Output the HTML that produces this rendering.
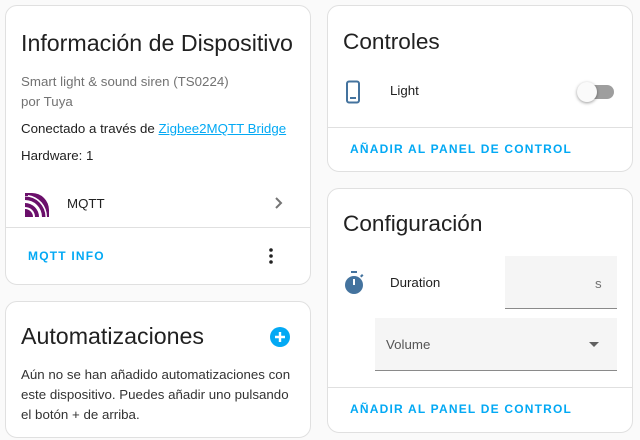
<!DOCTYPE html>
<html><head><meta charset="utf-8">
<style>
*{box-sizing:border-box;margin:0;padding:0}
body{width:640px;height:440px;background:#fafafa;font-family:"Liberation Sans",Roboto,sans-serif;position:relative;overflow:hidden;color:#212121}
.card{position:absolute;background:#fff;border:1px solid #e0e0e0;border-radius:12px;overflow:hidden}
.a{position:absolute;white-space:nowrap}
.h{font-size:22.6px;color:#212121}
.hl{font-size:23.2px;color:#212121}
.t{font-size:13.3px}
.g{color:#727272}
.btn{font-size:12px;font-weight:bold;letter-spacing:1.2px;color:#03a9f4}
.sep{position:absolute;left:0;right:0;height:1px;background:#e0e0e0}
</style></head><body>

<div class="card" style="left:5px;top:5px;width:306px;height:280px">
  <div class="a hl" style="left:15px;top:24px">Información de Dispositivo</div>
  <div class="a t g" style="left:15px;top:68px">Smart light &amp; sound siren (TS0224)</div>
  <div class="a t g" style="left:15px;top:88px">por Tuya</div>
  <div class="a t" style="left:15px;top:115px">Conectado a través de <span style="color:#03a9f4;text-decoration:underline">Zigbee2MQTT Bridge</span></div>
  <div class="a t" style="left:15px;top:142px">Hardware: 1</div>
  <svg class="a" style="left:19px;top:187px" width="24" height="24" viewBox="0 0 24 24">
    <path d="M0 0h3v3h-3zM0 24v-14a14 14 0 0 1 14 14h-4a10 10 0 0 0 -10 -10v10z" fill="#6a0f6a"/>
    <path d="M0 7v-3.5a20.5 20.5 0 0 1 20.5 20.5h-3.5a17 17 0 0 0 -17 -17z" fill="#6a0f6a"/>
    <path d="M3 0h4a17 17 0 0 1 17 17v7h-2a22 22 0 0 0 -19 -22z" fill="#6a0f6a"/>
    <path d="M0 24v-8a8 8 0 0 1 8 8z" fill="#6a0f6a"/>
  </svg>
  <div class="a t" style="left:61px;top:190px">MQTT</div>
  <svg class="a" style="left:265px;top:189px" width="16" height="16" viewBox="0 0 16 16"><path d="M5 3l5 5-5 5" stroke="#757575" stroke-width="2" fill="none"/></svg>
  <div class="sep" style="top:221px"></div>
  <div class="a btn" style="left:22px;top:243px">MQTT INFO</div>
  <svg class="a" style="left:262px;top:241px" width="6" height="18"><circle cx="3" cy="3" r="1.8" fill="#212121"/><circle cx="3" cy="9" r="1.8" fill="#212121"/><circle cx="3" cy="15" r="1.8" fill="#212121"/></svg>
</div>

<div class="card" style="left:5px;top:301px;width:306px;height:137px">
  <div class="a hl" style="left:15px;top:21px">Automatizaciones</div>
  <svg class="a" style="left:264px;top:25px" width="20" height="20" viewBox="0 0 20 20"><circle cx="10" cy="10" r="10" fill="#03a9f4"/><path d="M10 5v10M5 10h10" stroke="#fff" stroke-width="2.4"/></svg>
  <div class="a t" style="left:15px;top:63px;line-height:20px;color:#333">Aún no se han añadido automatizaciones con<br>este dispositivo. Puedes añadir uno pulsando<br>el botón + de arriba.</div>
</div>

<div class="card" style="left:327px;top:5px;width:306px;height:167px">
  <div class="a h" style="left:15px;top:23px">Controles</div>
  <svg class="a" style="left:17px;top:74px" width="18" height="24" viewBox="0 0 18 24"><rect x="2" y="1.5" width="12" height="21" rx="2" stroke="#44739e" stroke-width="2" fill="none"/><rect x="5" y="17" width="6" height="2" fill="#44739e"/></svg>
  <div class="a t" style="left:62px;top:77px">Light</div>
  <div class="a" style="left:256px;top:79px;width:30px;height:14px;border-radius:7px;background:#9e9e9e"></div>
  <div class="a" style="left:249px;top:76px;width:20px;height:20px;border-radius:50%;background:#fafafa;box-shadow:0 1px 3px rgba(0,0,0,.4)"></div>
  <div class="sep" style="top:121px"></div>
  <div class="a btn" style="left:22px;top:136px">AÑADIR AL PANEL DE CONTROL</div>
</div>

<div class="card" style="left:327px;top:188px;width:306px;height:245px">
  <div class="a h" style="left:15px;top:22px">Configuración</div>
  <svg class="a" style="left:15px;top:82px" width="22" height="24" viewBox="0 0 22 24"><rect x="8" y="0" width="6" height="2" fill="#44739e"/><circle cx="11" cy="14" r="9" fill="#44739e"/><rect x="10" y="8" width="2" height="6" fill="#fff"/><path d="M17 5l2-2 1.5 1.5-2 2z" fill="#44739e"/></svg>
  <div class="a t" style="left:62px;top:86px">Duration</div>
  <div class="a" style="left:177px;top:67px;width:112px;height:53px;background:#f5f5f5;border-bottom:1px solid #8a8a8a"></div>
  <div class="a t g" style="left:267px;top:87px">s</div>
  <div class="a" style="left:47px;top:129px;width:242px;height:53px;background:#f5f5f5;border-bottom:1px solid #8a8a8a"></div>
  <div class="a t" style="left:58px;top:148px;color:#555">Volume</div>
  <svg class="a" style="left:261px;top:153px" width="10" height="5"><path d="M0 0h10l-5 5z" fill="#616161"/></svg>
  <div class="sep" style="top:198px"></div>
  <div class="a btn" style="left:22px;top:213px">AÑADIR AL PANEL DE CONTROL</div>
</div>

</body></html>
